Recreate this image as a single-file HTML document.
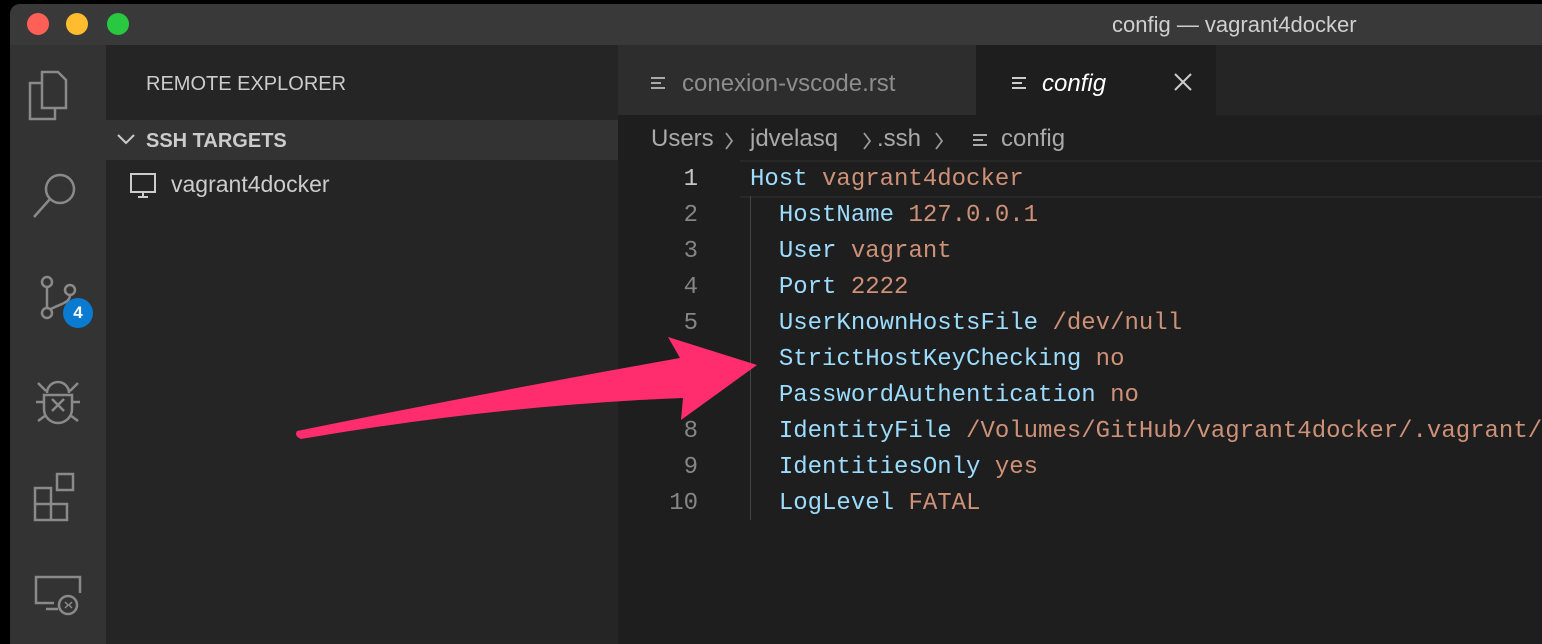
<!DOCTYPE html>
<html><head><meta charset="utf-8"><style>
body{margin:0;width:1542px;height:634px;background:#000;overflow:hidden;font-family:"Liberation Sans",sans-serif;position:relative}
.win{position:absolute;left:10px;top:4px;width:1540px;height:640px;background:#1e1e1e;border-radius:10px 0 0 0;overflow:hidden}
.title{position:absolute;left:0;top:0;right:0;height:41px;background:#393939;color:#cfcfcf;font-size:22px}
.dot{position:absolute;top:9px;width:22px;height:22px;border-radius:50%}
.act{position:absolute;left:0;top:41px;width:96px;bottom:0;background:#333}
.side{position:absolute;left:96px;top:41px;width:512px;bottom:0;background:#252526}
.tabs{position:absolute;left:608px;top:41px;right:0;height:70px;background:#252526}
.m{font-family:"Liberation Mono",monospace;font-size:24px;position:absolute;white-space:pre}
.k{color:#9cdcfe}.v{color:#ce9178}
.ln{color:#858585;text-align:right;width:50px;left:638px}
.ic{position:absolute}
.bc{position:absolute;top:121px;color:#a9a9a9;font-size:24px}
</style></head><body>
<div class="win">
<div class="title">
<div class="dot" style="left:17px;background:#fe5f57"></div>
<div class="dot" style="left:56px;background:#febc2e"></div>
<div class="dot" style="left:97px;background:#28c840"></div>
<div style="position:absolute;left:1102px;top:8px">config — vagrant4docker</div>
</div>
<div class="act">
<svg width="96" height="600" fill="none" stroke="#8a8a8a" stroke-width="2.5">
<path d="M32 63V27h16l8 8v28z"/><path d="M32 38H20v36h25V63"/>
<circle cx="50" cy="144" r="14"/><path d="M40 154l-16 18"/>
<circle cx="37" cy="237" r="5"/><circle cx="37" cy="268" r="5"/><circle cx="60" cy="245" r="5"/><path d="M37 242v21M60 250c0 8-10 9-19 14"/>
<path d="M37 348a11 11 0 0 1 22 0M34 350h28v14a14 14 0 0 1-28 0zM42 354l12 12M54 354l-12 12M26 357h8M62 357h8M28 338l8 8M68 338l-8 8M28 376l8-6M68 376l-8-6"/>
<path d="M25 443h16v16H25zM25 459h16v16H25zM41 459h16v16H41zM47 429h16v16H47z"/>
<path d="M44 558H26v-26h44v16M36 564h12"/><circle cx="58" cy="560" r="9"/><path d="M55 557l3 3-3 3M62 557l-3 3 3 3" stroke-width="1.5"/>
</svg>
<div style="position:absolute;left:53px;top:253px;width:30px;height:30px;border-radius:50%;background:#0b7ad1;color:#fff;font-size:17px;font-weight:bold;text-align:center;line-height:30px">4</div>
</div>
<div class="side">
<div style="position:absolute;left:40px;top:28px;color:#cccccc;font-size:20px">REMOTE EXPLORER</div>
<div style="position:absolute;left:0;top:75px;width:512px;height:40px;background:#333;color:#ccc;font-size:20px;font-weight:bold">
<svg style="position:absolute;left:10px;top:12px" width="20" height="14" fill="none" stroke="#ccc" stroke-width="2"><path d="M2 3l8 8 8-8"/></svg>
<span style="position:absolute;left:40px;top:10px">SSH TARGETS</span></div>
<svg style="position:absolute;left:22px;top:126px" width="30" height="28" fill="none" stroke="#ccc" stroke-width="2"><path d="M3 3h24v18H3zM10 26h10M15 21v5"/></svg>
<div style="position:absolute;left:65px;top:126px;color:#cccccc;font-size:23px">vagrant4docker</div>
</div>
<div class="tabs">
<div style="position:absolute;left:0;top:0;width:358px;height:70px;background:#2d2d2d;color:#8d8d8d;font-size:24px">
<svg class="ic" style="left:33px;top:31px" width="16" height="14" stroke="#aaa" stroke-width="2"><path d="M0 2h14M0 7h10M0 12h14"/></svg>
<span style="position:absolute;left:64px;top:25px">conexion-vscode.rst</span></div>
<div style="position:absolute;left:358px;top:0;width:240px;height:70px;background:#1e1e1e;color:#fff;font-size:24px">
<svg class="ic" style="left:36px;top:31px" width="16" height="14" stroke="#ccc" stroke-width="2"><path d="M0 2h14M0 7h10M0 12h14"/></svg>
<span style="position:absolute;left:66px;top:25px;font-style:italic">config</span>
<svg class="ic" style="left:197px;top:27px" width="20" height="20" stroke="#ccc" stroke-width="2"><path d="M2 2l16 16M18 2L2 18"/></svg></div>
</div>
<div class="bc" style="left:641px">Users</div>
<svg class="ic" style="left:714px;top:127px" width="10" height="20" fill="none" stroke="#999" stroke-width="1.8"><path d="M2 2l6 8-6 8"/></svg>
<div class="bc" style="left:740px">jdvelasq</div>
<svg class="ic" style="left:852px;top:127px" width="10" height="20" fill="none" stroke="#999" stroke-width="1.8"><path d="M2 2l6 8-6 8"/></svg>
<div class="bc" style="left:867px">.ssh</div>
<svg class="ic" style="left:924px;top:127px" width="10" height="20" fill="none" stroke="#999" stroke-width="1.8"><path d="M2 2l6 8-6 8"/></svg>
<svg class="ic" style="left:963px;top:129px" width="16" height="14" stroke="#aaa" stroke-width="2"><path d="M0 2h14M0 7h10M0 12h14"/></svg>
<div class="bc" style="left:991px">config</div>
<div style="position:absolute;left:730px;top:156px;right:0;height:34px;border-top:2px solid #282828;border-bottom:2px solid #282828"></div>
<div style="position:absolute;left:740px;top:192px;width:1px;height:324px;background:#444"></div>
<div class="m ln" style="top:162px;color:#c6c6c6">1</div>
<div class="m ln" style="top:198px">2</div><div class="m ln" style="top:234px">3</div><div class="m ln" style="top:270px">4</div><div class="m ln" style="top:306px">5</div><div class="m ln" style="top:342px">6</div><div class="m ln" style="top:378px">7</div><div class="m ln" style="top:414px">8</div><div class="m ln" style="top:450px">9</div><div class="m ln" style="top:486px">10</div>
<div class="m" style="left:740px;top:162px"><span class="k">Host</span> <span class="v">vagrant4docker</span></div>
<div class="m" style="left:740px;top:198px">  <span class="k">HostName</span> <span class="v">127.0.0.1</span></div>
<div class="m" style="left:740px;top:234px">  <span class="k">User</span> <span class="v">vagrant</span></div>
<div class="m" style="left:740px;top:270px">  <span class="k">Port</span> <span class="v">2222</span></div>
<div class="m" style="left:740px;top:306px">  <span class="k">UserKnownHostsFile</span> <span class="v">/dev/null</span></div>
<div class="m" style="left:740px;top:342px">  <span class="k">StrictHostKeyChecking</span> <span class="v">no</span></div>
<div class="m" style="left:740px;top:378px">  <span class="k">PasswordAuthentication</span> <span class="v">no</span></div>
<div class="m" style="left:740px;top:414px">  <span class="k">IdentityFile</span> <span class="v">/Volumes/GitHub/vagrant4docker/.vagrant/</span></div>
<div class="m" style="left:740px;top:450px">  <span class="k">IdentitiesOnly</span> <span class="v">yes</span></div>
<div class="m" style="left:740px;top:486px">  <span class="k">LogLevel</span> <span class="v">FATAL</span></div>
</div>
<svg style="position:absolute;left:0;top:0" width="1542" height="634">
<path d="M297 431 Q500 390 680 358 L668 337 L757 365 L681 420 L683 398 Q500 405 301 439 Q294 436 297 431Z" fill="#ff2d6d"/>
</svg>
</body></html>
